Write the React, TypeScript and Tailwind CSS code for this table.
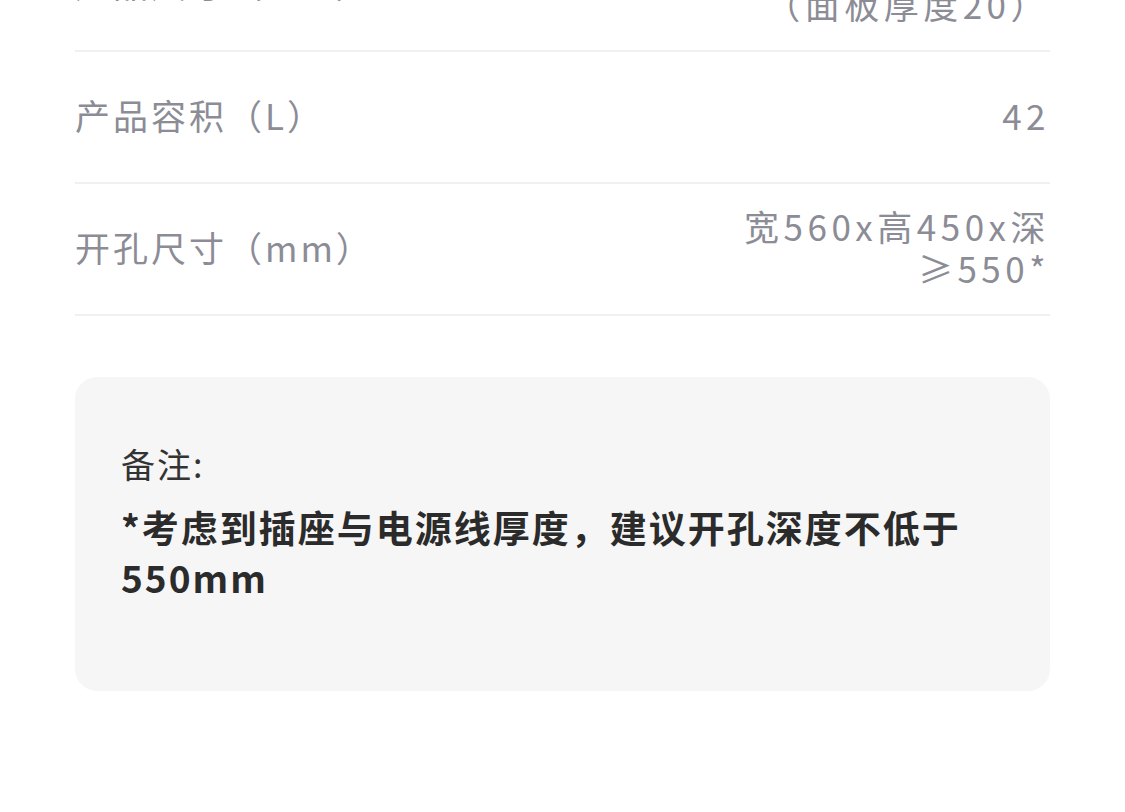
import React from 'react';

interface SpecRow {
    label: string;
    value: string[];
}

const rows: SpecRow[] = [
    { label: '产品尺寸（mm）', value: ['宽595x高455x深480', '（面板厚度20）'] },
    { label: '产品容积（L）', value: ['42'] },
    { label: '开孔尺寸（mm）', value: ['宽560x高450x深', '≥550*'] },
];

const font = { fontFamily: '"Noto Sans CJK SC", "Noto Sans", sans-serif' };

export default function App() {
    return (
        <div className="w-[1125px] h-[812px] overflow-hidden bg-white" style={font}>
            <div className="mx-[75px] -mt-[80px]">
                {rows.map((row) => (
                    <div
                        key={row.label}
                        className="h-[132px] pb-[5px] flex items-center justify-between border-b-2 border-[#f0f0f2]"
                    >
                        <span className="text-[35px] leading-[42px] tracking-[3px] text-[#8c8c96]">
                            {row.label}
                        </span>
                        <div className="text-right text-[35px] leading-[42px] tracking-[4.5px] text-[#8c8c96]">
                            {row.value.map((line) => (
                                <div key={line}>{line}</div>
                            ))}
                        </div>
                    </div>
                ))}

                <div className="mt-[61px] rounded-[22px] bg-[#f6f6f6] pl-[46px] pr-[40px] pt-[66px] pb-[89px]">
                    <p className="text-[34px] leading-[42px] tracking-[2px] text-[#333333]">备注:</p>
                    <p className="mt-[17px] text-[37px] leading-[50px] tracking-[2px] font-bold text-[#2b2b2b]">
                        *考虑到插座与电源线厚度，建议开孔深度不低于550mm
                    </p>
                </div>
            </div>
        </div>
    );
}
